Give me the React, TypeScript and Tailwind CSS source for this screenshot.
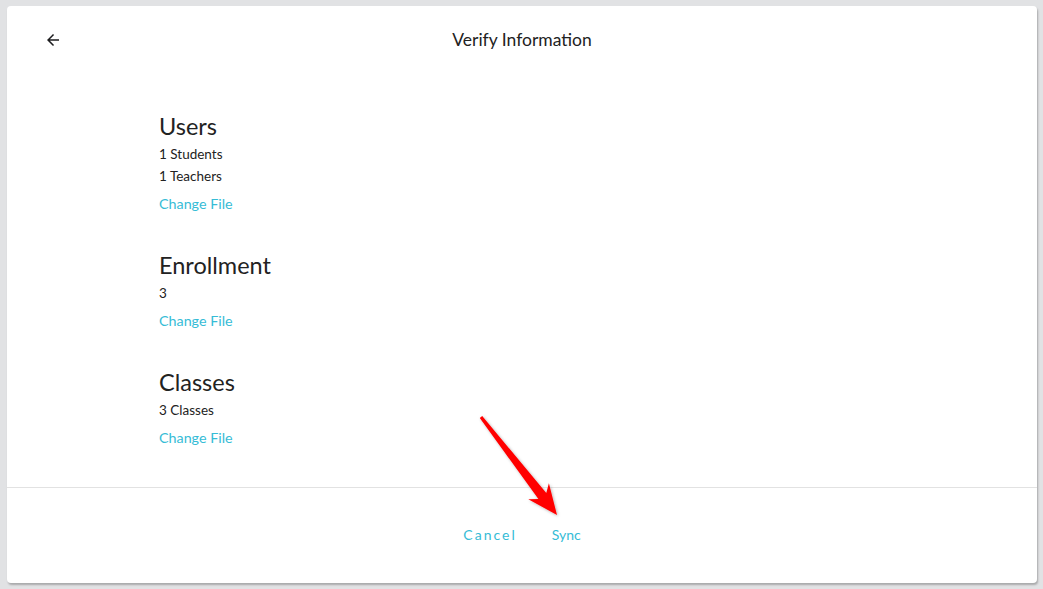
import React from 'react'

const sections = [
  { title: 'Users', lines: ['1 Students', '1 Teachers'] },
  { title: 'Enrollment', lines: ['3'] },
  { title: 'Classes', lines: ['3 Classes'] },
]

function BackIcon() {
  return (
    <svg viewBox="0 0 24 24" className="size-[18px] text-[#1d1d1f]" fill="currentColor">
      <path d="M20 11H7.83l5.59-5.59L12 4l-8 8 8 8 1.41-1.41L7.83 13H20v-2z" />
    </svg>
  )
}

export default function App() {
  return (
    <div
      className="relative h-[589px] w-[1043px] overflow-hidden bg-[#e1e2e4] pt-[6px] pl-[7px]"
      style={{ fontFamily: 'Lato, "Open Sans", sans-serif' }}
    >
      <div className="flex h-[577px] w-[1030px] flex-col rounded-[4px] bg-white shadow-[1px_2px_2px_rgba(0,0,0,0.25)]">
        {/* header */}
        <div className="relative flex h-[68px] shrink-0 items-center justify-center">
          <button className="absolute top-[25px] left-[37px] flex">
            <BackIcon />
          </button>
          <h1 className="text-[17.5px] text-[#222]">Verify Information</h1>
        </div>

        {/* content */}
        <div className="flex flex-1 flex-col gap-[36px] pt-[38px] pl-[152px]">
          {sections.map((s) => (
            <div key={s.title} className="flex flex-col">
              <h2 className="mb-[3px] text-[23.5px] leading-[28px] text-[#222]">{s.title}</h2>
              {s.lines.map((l) => (
                <p key={l} className="text-[13.5px] leading-[22px] text-[#222]">
                  {l}
                </p>
              ))}
              <a className="mt-[6px] text-[14.3px] leading-[22px] text-[#36bcd6]">Change File</a>
            </div>
          ))}
        </div>

        {/* footer */}
        <div className="flex h-[96px] shrink-0 items-center justify-center gap-[35px] border-t border-[#e2e2e2] pb-[2px]">
          <button className="text-[14px] tracking-[2px] text-[#36bcd6]">Cancel</button>
          <button className="text-[14px] text-[#36bcd6]">Sync</button>
        </div>
      </div>

      {/* annotation arrow */}
      <svg className="pointer-events-none absolute inset-0" width="1043" height="589">
        <defs>
          <filter id="sh" x="-20%" y="-20%" width="140%" height="140%">
            <feDropShadow dx="1" dy="1" stdDeviation="1.5" floodColor="#000" floodOpacity="0.3" />
          </filter>
        </defs>
        <polygon
          points="479.8,417.9 538.4,499.1 528.3,499.3 557,515 548.9,483.3 546.3,492.9 482.2,416.1"
          fill="#ff0000"
          filter="url(#sh)"
        />
      </svg>
    </div>
  )
}
